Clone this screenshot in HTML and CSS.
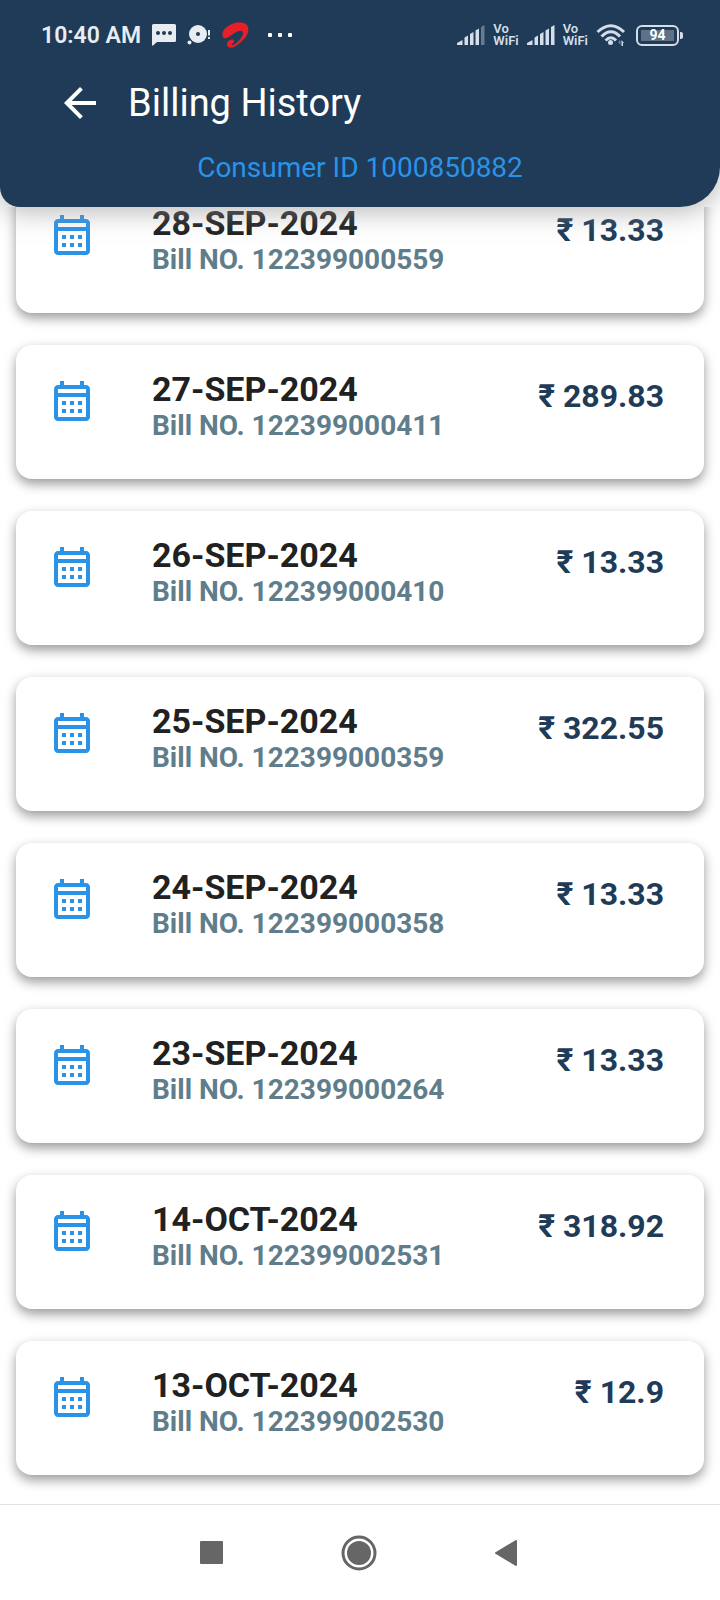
FILE: index.html
```html
<!DOCTYPE html>
<html lang="en">
  <head>
    <meta charset="UTF-8" />
    <meta name="viewport" content="width=device-width, initial-scale=1.0" />
    <title>Billing History</title>
    <link rel="stylesheet" href="styles.css">
  </head>
  <body>
    <!-- shared icons -->
    <svg class="sprite" aria-hidden="true">
      <symbol id="calendar" viewBox="0 0 24 24">
        <path d="M19 4h-1V2h-2v2H8V2H6v2H5C3.89 4 3.01 4.9 3.01 6L3 20c0 1.1.89 2 2 2h14c1.1 0 2-.9 2-2V6c0-1.1-.9-2-2-2zm0 16H5V10h14v10zm0-12H5V6h14v2zM9 14H7v-2h2v2zm4 0h-2v-2h2v2zm4 0h-2v-2h2v2zm-8 4H7v-2h2v2zm4 0h-2v-2h2v2zm4 0h-2v-2h2v2z" />
      </symbol>
      <symbol id="bars" viewBox="0 0 28 20">
        <path d="M0 20v-2l5.500-3v5zM7.500 20v-7.500l3.500-2V20zM13 20V9l3.500-2V20zM18.500 20V5.500L22 3.500V20z" />
      </symbol>
    </svg>

    <div class="app">
      <header class="header">
        <div class="status">
          <div class="status-left">
            <span class="time">10:40 AM</span>
            <svg width="24" height="22" viewBox="0 0 24 22">
              <path fill="#e8edf2" d="M1.500 0h21Q24 0 24 1.500v15Q24 18 22.500 18H5l-4 3.500Q0 22 0 21V1.500Q0 0 1.500 0z" />
              <circle cx="6" cy="9" r="2" fill="#1f3b57" />
              <circle cx="12" cy="9" r="2" fill="#1f3b57" />
              <circle cx="18" cy="9" r="2" fill="#1f3b57" />
            </svg>
            <svg width="24" height="20" viewBox="0 0 24 20" fill="#e8edf2">
              <circle cx="11" cy="9" r="9" />
              <circle cx="11" cy="9" r="2" fill="#1f3b57" />
              <circle cx="2.500" cy="17.500" r="3" fill="#1f3b57" />
              <circle cx="2.500" cy="17.500" r="2" />
              <path d="M21 5h2v5.500h-2zM21 12h2v2h-2z" />
            </svg>
            <svg width="27" height="27" viewBox="0 0 27 27">
              <path fill="#e81f26" d="M1 15C-1 11 2 6 8 3 14-.5 21-1 25 3c3 4 1 11-5 16-4 4-9 7.500-12.500 6.500C4 24.500 4.500 20.500 7 18.500c2-1.500 4.500-1.500 5 0 .5 1.500-.5 2.500-2 3-.8.500-.5 1.500.5 1.500 2 0 4.500-2.500 7-5C20 15 22 11.500 20.500 9.500c-1.500-1.800-5-.5-8 1.500C9 13.500 3.500 18.500 1 15z" />
            </svg>
            <svg class="more" width="24" height="4" viewBox="0 0 24 4" fill="#fff">
              <rect width="4" height="4" rx="1" />
              <rect x="10" width="4" height="4" rx="1" />
              <rect x="20" width="4" height="4" rx="1" />
            </svg>
          </div>
          <div class="status-right">
            <svg width="28" height="20" viewBox="0 0 28 20" fill="#d5dee8">
              <use href="#bars" />
              <path opacity=".4" d="M24 20V2l3.500-2v20z" />
            </svg>
            <span class="vowifi">Vo<br>WiFi</span>
            <svg width="28" height="20" viewBox="0 0 28 20" fill="#d5dee8">
              <use href="#bars" />
              <path d="M24 20V2l3.500-2v20z" />
            </svg>
            <span class="vowifi">Vo<br>WiFi</span>
            <svg width="30" height="22" viewBox="0 0 30 22">
              <g fill="none" stroke="#d5dee8" stroke-width="3">
                <path d="M1.500 8Q15-4.500 28 8" />
                <path d="M5.500 12.500Q15 3 24 12.500" />
                <path d="M9.500 16.500Q15 11 20 16.500" />
              </g>
              <circle cx="14.500" cy="18.500" r="2.500" fill="#d5dee8" />
              <path fill="#6f8296" d="M22 18h1v-1.500h1.500V21z" />
              <path fill="#d5dee8" d="M25.500 16l2.500 3h-1v3h-1.500z" />
            </svg>
            <div class="battery"><span>94</span></div>
          </div>
        </div>
        <div class="title-row">
          <button type="button" class="back" aria-label="Back">
            <svg width="48" height="48" viewBox="0 0 24 24" fill="#fff">
              <path d="M20 11H7.830l5.590-5.590L12 4l-8 8 8 8 1.410-1.410L7.830 13H20v-2z" />
            </svg>
          </button>
          <h1>Billing History</h1>
        </div>
        <p class="consumer">Consumer ID 1000850882</p>
      </header>

      <main class="content">
        <ul class="bills">
          <li class="bill">
            <svg class="icon"><use href="#calendar" /></svg>
            <div class="info">
              <h2>28-SEP-2024</h2>
              <p>Bill NO. 122399000559</p>
            </div>
            <span class="amount">₹ 13.33</span>
          </li>
          <li class="bill">
            <svg class="icon"><use href="#calendar" /></svg>
            <div class="info">
              <h2>27-SEP-2024</h2>
              <p>Bill NO. 122399000411</p>
            </div>
            <span class="amount">₹ 289.83</span>
          </li>
          <li class="bill">
            <svg class="icon"><use href="#calendar" /></svg>
            <div class="info">
              <h2>26-SEP-2024</h2>
              <p>Bill NO. 122399000410</p>
            </div>
            <span class="amount">₹ 13.33</span>
          </li>
          <li class="bill">
            <svg class="icon"><use href="#calendar" /></svg>
            <div class="info">
              <h2>25-SEP-2024</h2>
              <p>Bill NO. 122399000359</p>
            </div>
            <span class="amount">₹ 322.55</span>
          </li>
          <li class="bill">
            <svg class="icon"><use href="#calendar" /></svg>
            <div class="info">
              <h2>24-SEP-2024</h2>
              <p>Bill NO. 122399000358</p>
            </div>
            <span class="amount">₹ 13.33</span>
          </li>
          <li class="bill">
            <svg class="icon"><use href="#calendar" /></svg>
            <div class="info">
              <h2>23-SEP-2024</h2>
              <p>Bill NO. 122399000264</p>
            </div>
            <span class="amount">₹ 13.33</span>
          </li>
          <li class="bill">
            <svg class="icon"><use href="#calendar" /></svg>
            <div class="info">
              <h2>14-OCT-2024</h2>
              <p>Bill NO. 122399002531</p>
            </div>
            <span class="amount">₹ 318.92</span>
          </li>
          <li class="bill">
            <svg class="icon"><use href="#calendar" /></svg>
            <div class="info">
              <h2>13-OCT-2024</h2>
              <p>Bill NO. 122399002530</p>
            </div>
            <span class="amount">₹ 12.9</span>
          </li>
        </ul>
      </main>

      <nav class="navbar">
        <button type="button" aria-label="Recent apps">
          <svg width="24" height="24" viewBox="0 0 24 24"><rect width="23" height="23" rx="1" fill="#666" /></svg>
        </button>
        <button type="button" aria-label="Home">
          <svg width="36" height="36" viewBox="0 0 36 36">
            <circle cx="18" cy="18" r="16" fill="none" stroke="#666" stroke-width="3" />
            <circle cx="18" cy="18" r="12" fill="#666" />
          </svg>
        </button>
        <button type="button" aria-label="Go back">
          <svg width="24" height="26" viewBox="0 0 24 26"><path d="M2 13L22 1v24z" fill="#666" stroke="#666" stroke-width="2" stroke-linejoin="round" /></svg>
        </button>
      </nav>
    </div>
  </body>
</html>
```

FILE: styles.css
```css
* {
  margin: 0;
  padding: 0;
  box-sizing: border-box;
  font-family: Roboto, "Liberation Sans", sans-serif;
}

body {
  background: #fff;
}

button {
  border: none;
  background: none;
  cursor: pointer;
}

svg {
  display: block;
  flex-shrink: 0;
}

.sprite {
  display: none;
}

.app {
  display: flex;
  flex-direction: column;
  height: 100vh;
}

/* header */
.header {
  position: relative;
  z-index: 1;
  padding-bottom: 9px;
  background: #1f3b57;
  border-radius: 0 0 40px 20px;
  box-shadow: 0 4px 28px rgba(150, 150, 150, 0.7);
}

.status {
  display: flex;
  align-items: center;
  justify-content: space-between;
  height: 68px;
  padding: 2px 37px 0 41px;
}

.status-left {
  display: flex;
  align-items: center;
  gap: 11px;
}

.time {
  color: #e8edf2;
  font-size: 23px;
  font-weight: 600;
}

.more {
  margin-left: 8px;
}

.status-right {
  display: flex;
  align-items: center;
  gap: 8px;
}

.vowifi {
  color: #d5dee8;
  font-size: 13px;
  font-weight: 600;
  line-height: 12px;
}

.battery {
  position: relative;
  display: flex;
  width: 43px;
  height: 21px;
  margin: 0 4px 0 2px;
  padding: 3px;
  border: 2px solid #d5dee8;
  border-radius: 6px;
}

.battery::after {
  content: "";
  position: absolute;
  top: 5px;
  right: -6px;
  width: 3px;
  height: 7px;
  border-radius: 0 2px 2px 0;
  background: #d5dee8;
}

.battery span {
  flex: 1;
  background: #5d7287;
  color: #fff;
  font-size: 14px;
  font-weight: 700;
  line-height: 11px;
  text-align: center;
}

.title-row {
  display: flex;
  align-items: center;
  gap: 24px;
  height: 70px;
  padding: 0 56px;
}

.title-row h1 {
  color: #fff;
  font-size: 38px;
  font-weight: 400;
  line-height: 48px;
}

.consumer {
  color: #2a93e8;
  font-size: 28px;
  line-height: 60px;
  text-align: center;
}

/* bill list */
.content {
  flex: 1;
  min-height: 0;
  overflow: hidden;
}

.bills {
  display: flex;
  flex-direction: column;
  gap: 32px;
  margin-top: -28px;
  padding: 0 16px;
  list-style: none;
}

.bill {
  display: flex;
  align-items: flex-start;
  padding: 28px 40px 32px 32px;
  border-radius: 16px;
  background: #fff;
  box-shadow: 0 5px 12px rgba(0, 0, 0, 0.4);
}

.icon {
  width: 48px;
  height: 48px;
  margin: 4px 56px 0 0;
  fill: #2a93e8;
}

.info {
  flex: 1;
}

.info h2 {
  color: #212121;
  font-size: 34px;
  font-weight: 700;
  line-height: 32px;
}

.info p {
  color: #607d8b;
  font-size: 28px;
  font-weight: 700;
  line-height: 42px;
}

.amount {
  margin-top: 5px;
  color: #1f3b57;
  font-size: 32px;
  font-weight: 700;
  line-height: 36px;
}

/* system navigation */
.navbar {
  display: flex;
  align-items: center;
  justify-content: center;
  gap: 99px;
  height: 96px;
  padding-right: 2px;
  border-top: 1px solid #e2e2e2;
  background: #fff;
}

.navbar button {
  display: flex;
  align-items: center;
  justify-content: center;
  width: 48px;
  height: 48px;
}
```
